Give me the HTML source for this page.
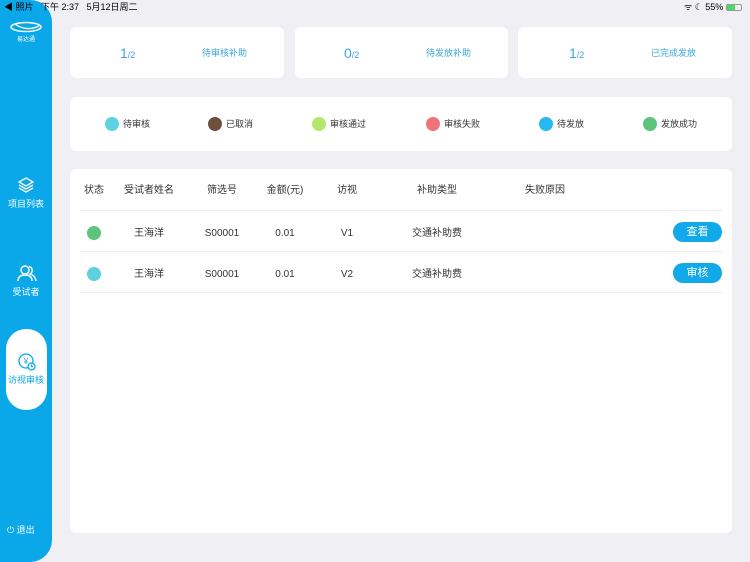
<!DOCTYPE html>
<html><head><meta charset="utf-8"><style>
*{margin:0;padding:0;box-sizing:border-box}
body{width:750px;height:562px;background:#f0eff4;font-family:"Liberation Sans","Noto Sans CJK SC",sans-serif;position:relative;overflow:hidden;color:#333}
.sb{position:absolute;left:0;top:0;width:52px;height:562px;background:#0aa8e8;border-radius:0 22px 22px 0}
.status{position:absolute;top:2px;font-size:9px;color:#000;line-height:11px}
.card{position:absolute;background:#fff;border-radius:6px}
.num{position:absolute;top:18px;font-size:14px;color:#3aa6df;line-height:16px}
.num small{font-size:9px}
.lbl{position:absolute;top:20px;font-size:9px;color:#3aa6df;line-height:12px}
.lg{position:absolute;top:20px;font-size:9px;color:#333;display:flex;align-items:center;line-height:14px}
.lg i{display:inline-block;width:14px;height:14px;border-radius:50%;margin-right:4px}
.t{position:absolute;font-size:10px;color:#333;transform:translateX(-50%);white-space:nowrap;line-height:14px;height:14px}
.hr{position:absolute;left:10px;right:10px;height:1px;background:#ececec}
.dot{position:absolute;width:14px;height:14px;border-radius:50%}
.btn{position:absolute;left:603px;width:49px;height:20px;border-radius:10px;background:#12a9e9;color:#fff;font-size:11px;text-align:center;line-height:20px}
.nav{position:absolute;left:0;width:52px;text-align:center;color:#fff;font-size:9px;line-height:12px}
</style></head><body>
<div class="sb"></div>
<div class="status" style="left:4px">◀ 照片 &nbsp;&nbsp;下午 2:37 &nbsp;&nbsp;5月12日周二</div>
<div class="status" style="left:684px">ᯤ ☾ 55% <span style="display:inline-block;width:16px;height:7px;border:1px solid #999;border-radius:2px;vertical-align:middle;position:relative"><span style="position:absolute;left:0;top:0;width:8px;height:5px;background:#4cd964"></span></span></div>
<svg style="position:absolute;left:9px;top:20px" width="34" height="14" viewBox="0 0 34 14"><ellipse cx="17" cy="7" rx="15" ry="4.5" fill="none" stroke="#fff" stroke-width="1.5"/><path d="M6 4 Q17 12 30 6" fill="none" stroke="#fff" stroke-width="1.3"/></svg>
<div class="nav" style="top:34px;font-size:6px">易达通</div>
<svg style="position:absolute;left:17px;top:176px" width="18" height="18" viewBox="0 0 18 18" fill="none" stroke="#fff" stroke-width="1.3"><path d="M9 2 L16 6 L9 10 L2 6Z"/><path d="M2 9 L9 13 L16 9"/><path d="M2 12 L9 16 L16 12"/></svg>
<div class="nav" style="top:198px">项目列表</div>
<svg style="position:absolute;left:16px;top:264px" width="22" height="18" viewBox="0 0 22 18" fill="none" stroke="#fff" stroke-width="1.4"><circle cx="9" cy="6" r="4"/><path d="M2 17 Q2 11 9 11 Q16 11 16 17"/><path d="M13 2.5 A4 4 0 0 1 14 10 Q19 11 20 17"/></svg>
<div class="nav" style="top:286px">受试者</div>
<div style="position:absolute;left:6px;top:329px;width:41px;height:81px;background:#fff;border-radius:20px"></div>
<svg style="position:absolute;left:17px;top:352px" width="20" height="20" viewBox="0 0 20 20" fill="none" stroke="#0aa8e8" stroke-width="1.3"><circle cx="9" cy="9" r="7"/><text x="9" y="12" font-size="8" text-anchor="middle" fill="#0aa8e8" stroke="none">¥</text><circle cx="14.5" cy="14.5" r="3.5" fill="#fff"/><path d="M14.5 12.5 V14.5 H16"/></svg>
<div class="nav" style="top:374px;color:#0aa8e8">访视审核</div>
<div class="nav" style="top:524px;text-align:left;padding-left:7px">⏻ 退出</div>

<div class="card" style="left:70px;top:27px;width:214px;height:51px"><div class="num" style="left:50px">1<small>/2</small></div><div class="lbl" style="left:132px">待审核补助</div></div>
<div class="card" style="left:295px;top:27px;width:213px;height:51px"><div class="num" style="left:49px">0<small>/2</small></div><div class="lbl" style="left:131px">待发放补助</div></div>
<div class="card" style="left:518px;top:27px;width:214px;height:51px"><div class="num" style="left:51px">1<small>/2</small></div><div class="lbl" style="left:133px">已完成发放</div></div>

<div class="card" style="left:70px;top:97px;width:662px;height:54px">
<div class="lg" style="left:35px"><i style="background:#5fd0e0"></i>待审核</div>
<div class="lg" style="left:138px"><i style="background:#6f4f3e"></i>已取消</div>
<div class="lg" style="left:242px"><i style="background:#b3e66b"></i>审核通过</div>
<div class="lg" style="left:356px"><i style="background:#f0727a"></i>审核失败</div>
<div class="lg" style="left:469px"><i style="background:#26b8f0"></i>待发放</div>
<div class="lg" style="left:573px"><i style="background:#5cc47d"></i>发放成功</div>
</div>

<div class="card" style="left:70px;top:169px;width:662px;height:364px">
<div class="t" style="left:24px;top:15px">状态</div>
<div class="t" style="left:79px;top:15px">受试者姓名</div>
<div class="t" style="left:152px;top:15px">筛选号</div>
<div class="t" style="left:215px;top:15px">金额(元)</div>
<div class="t" style="left:277px;top:15px">访视</div>
<div class="t" style="left:367px;top:15px">补助类型</div>
<div class="t" style="left:475px;top:15px">失败原因</div>
<div class="hr" style="top:41px"></div>
<div class="dot" style="left:17px;top:57px;background:#5cc47d"></div>
<div class="t" style="left:79px;top:58px">王海洋</div>
<div class="t" style="left:152px;top:58px">S00001</div>
<div class="t" style="left:215px;top:58px">0.01</div>
<div class="t" style="left:277px;top:58px">V1</div>
<div class="t" style="left:367px;top:58px">交通补助费</div>
<div class="btn" style="top:53px">查看</div>
<div class="hr" style="top:82px"></div>
<div class="dot" style="left:17px;top:98px;background:#5fd0e0"></div>
<div class="t" style="left:79px;top:99px">王海洋</div>
<div class="t" style="left:152px;top:99px">S00001</div>
<div class="t" style="left:215px;top:99px">0.01</div>
<div class="t" style="left:277px;top:99px">V2</div>
<div class="t" style="left:367px;top:99px">交通补助费</div>
<div class="btn" style="top:94px">审核</div>
<div class="hr" style="top:123px"></div>
</div>
</body></html>
